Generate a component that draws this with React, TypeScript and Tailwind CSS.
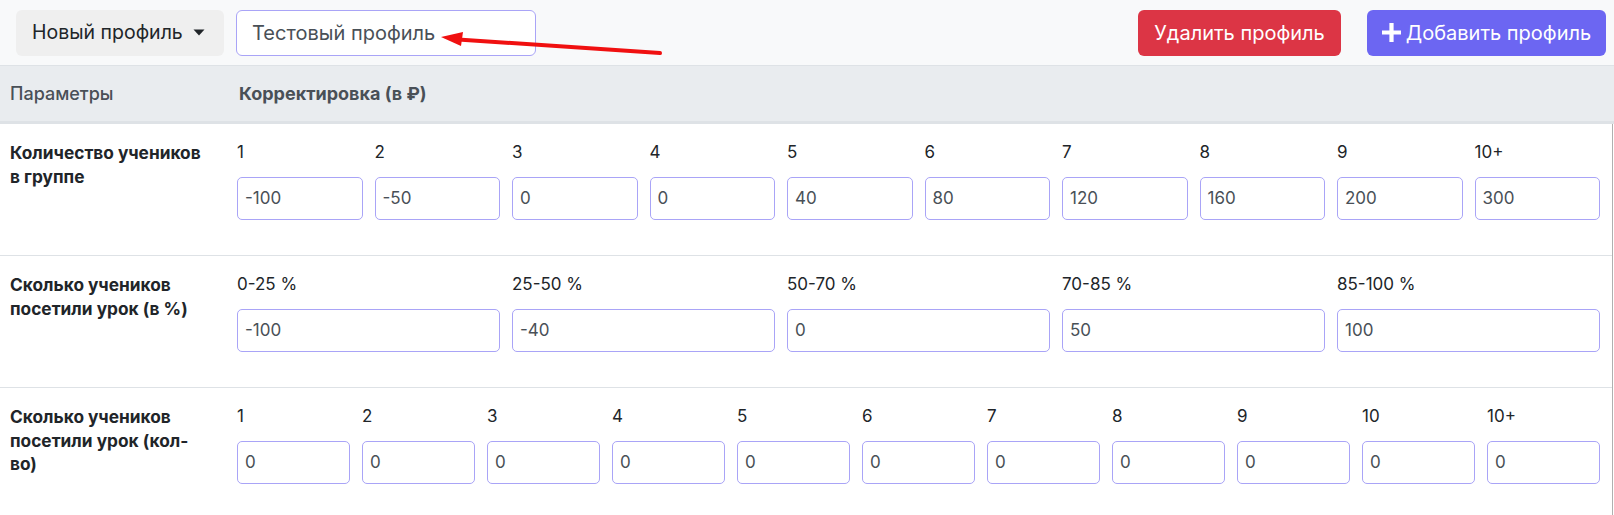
import React from "react";

const row1 = [
  ["1", "-100"], ["2", "-50"], ["3", "0"], ["4", "0"], ["5", "40"],
  ["6", "80"], ["7", "120"], ["8", "160"], ["9", "200"], ["10+", "300"],
];
const row2 = [
  ["0-25 %", "-100"], ["25-50 %", "-40"], ["50-70 %", "0"], ["70-85 %", "50"], ["85-100 %", "100"],
];
const row3 = ["1", "2", "3", "4", "5", "6", "7", "8", "9", "10", "10+"].map((l) => [l, "0"]);

function Field({ label, value }: { label: string; value: string }) {
  return (
    <div className="pr-[12px]">
      <div className="h-[24px] leading-[24px] text-[17px] text-[#212529]">{label}</div>
      <div className="mt-[13px] h-[43px] border border-[#a9a4f7] rounded-[5px] bg-white flex items-center pl-[7px] text-[17px] text-[#495057]">
        {value}
      </div>
    </div>
  );
}

function Row({
  label,
  items,
  cols,
}: {
  label: React.ReactNode;
  items: string[][];
  cols: string;
}) {
  return (
    <div className="flex border-b border-[#dee2e6] pt-[16px] pb-[35px]">
      <div className="w-[237px] shrink-0 pl-[10px] pt-[1px] text-[17.3px] leading-[23.5px] font-bold text-[#212529]">
        {label}
      </div>
      <div className={`flex-1 grid ${cols}`}>
        {items.map(([l, v], i) => (
          <Field key={i} label={l} value={v} />
        ))}
      </div>
    </div>
  );
}

export default function App() {
  return (
    <div className="relative w-[1614px] h-[515px] overflow-hidden bg-white" style={{ fontFamily: "Inter, 'Noto Sans', sans-serif" }}>
      {/* Top bar */}
      <div className="h-[66px] bg-[#f8f9fa] border-b border-[#dee2e6] flex items-center pl-[16px] pr-[8px]">
        <div className="w-[208px] h-[46px] bg-[#efefef] rounded-[6px] flex items-center pl-[16px] text-[19.5px] text-[#212529]">
          <span>Новый профиль</span>
          <svg width="12" height="7" viewBox="0 0 12 7" className="ml-[10px]">
            <path d="M0.5 0.5 L11.5 0.5 L6 6.5 Z" fill="#212529" />
          </svg>
        </div>
        <div className="ml-[12px] w-[300px] h-[46px] bg-white border border-[#a9a4f7] rounded-[6px] flex items-center pl-[15px] text-[20px] text-[#495057]">
          Тестовый профиль
        </div>
        <div className="flex-1" />
        <button className="w-[203px] h-[46px] bg-[#dc3545] rounded-[6px] text-white text-[20px] flex items-center justify-center">
          Удалить профиль
        </button>
        <button className="ml-[26px] w-[239px] h-[46px] bg-[#6c66f2] rounded-[6px] text-white text-[20px] flex items-center justify-center">
          <svg width="19" height="19" viewBox="0 0 18 18" className="mr-[5px]">
            <path d="M7 0 H11 V7 H18 V11 H11 V18 H7 V11 H0 V7 H7 Z" fill="#ffffff" />
          </svg>
          Добавить профиль
        </button>
      </div>

      {/* Table header */}
      <div className="flex items-center h-[58px] bg-[#e9ecef] border-b-[3px] border-[#dee2e6] text-[18px] text-[#495057]">
        <div className="w-[237px] pl-[10px] font-medium">Параметры</div>
        <div className="pl-[2px] font-bold">Корректировка (в ₽)</div>
      </div>

      {/* Body */}
      <div className="mr-[1px] border-r border-[#b0b0b0]">
        <Row
          label={<>Количество учеников<br />в группе</>}
          items={row1}
          cols="grid-cols-10"
        />
        <Row
          label={<>Сколько учеников<br />посетили урок (в %)</>}
          items={row2}
          cols="grid-cols-5"
        />
        <Row
          label={<>Сколько учеников<br />посетили урок (кол-<br />во)</>}
          items={row3}
          cols="grid-cols-11"
        />
      </div>

      {/* Red annotation arrow */}
      <svg className="absolute left-[430px] top-[25px] pointer-events-none" width="240" height="36" viewBox="430 25 240 36">
        <line x1="660" y1="53" x2="458" y2="39.5" stroke="#f01010" strokeWidth="4" strokeLinecap="round" />
        <path d="M441 37 L463 32 L461 46 Z" fill="#f01010" />
      </svg>
    </div>
  );
}
